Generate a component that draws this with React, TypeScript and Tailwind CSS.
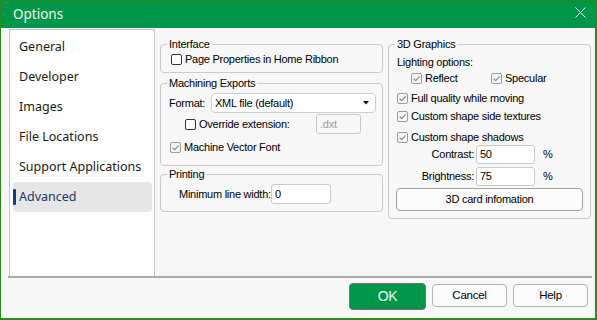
import React from 'react';

const navItems = ['General', 'Developer', 'Images', 'File Locations', 'Support Applications', 'Advanced'];

const Box: React.FC<{ checked?: boolean }> = ({ checked }) =>
  checked ? (
    <span className="w-[11px] h-[11px] shrink-0 border border-[#9b9b9b] rounded-[2px] bg-[#f7f7f7] flex items-center justify-center">
      <svg width="9" height="9" viewBox="0 0 9 9">
        <path d="M1.6 4.6 L3.7 6.7 L7.6 2.3" stroke="#878787" strokeWidth="1.1" fill="none" />
      </svg>
    </span>
  ) : (
    <span className="w-[11px] h-[11px] shrink-0 border border-[#333333] rounded-[2px] bg-white" />
  );

const CheckRow: React.FC<{ label: string; checked?: boolean; className?: string }> = ({ label, checked, className }) => (
  <div className={`flex items-center gap-[3px] h-[14px] ${className ?? ''}`}>
    <Box checked={checked} />
    <span>{label}</span>
  </div>
);

const Field: React.FC<{ value: string; className?: string; disabled?: boolean }> = ({ value, className, disabled }) => (
  <div
    className={`border border-[#c9c9c9] rounded-[3px] flex items-center pl-[3px] ${
      disabled ? 'bg-[#f7f7f7] text-[#9b9b9b]' : 'bg-white text-black'
    } ${className ?? ''}`}
  >
    {value}
  </div>
);

// fieldset keeps no horizontal padding so the legend sits at a fixed offset
const Group: React.FC<{ title: string; className?: string; inner?: string; children: React.ReactNode }> = ({
  title,
  className,
  inner,
  children,
}) => (
  <fieldset className={`border border-[#cacaca] rounded-[4px] ${className ?? ''}`}>
    <legend className="ml-[6px] px-[2px] leading-[13px]">{title}</legend>
    <div className={inner}>{children}</div>
  </fieldset>
);

export default function App() {
  return (
    <div className="w-[597px] h-[320px] bg-[#f7f7f7] border-l border-t border-r-2 border-b-2 border-[#2b8a1c] flex flex-col overflow-hidden">
      {/* title bar */}
      <div className="h-[27px] shrink-0 bg-[#00964a] flex items-center justify-between pl-[12px] pr-[9px]">
        <span className="text-[13.5px] text-[#eef8f1] font-['Noto_Sans',sans-serif]">Options</span>
        <svg width="11" height="11" viewBox="0 0 11 11" className="mb-[5px]">
          <path d="M0.5 0.5 L10.5 10.5 M10.5 0.5 L0.5 10.5" stroke="#ffffff" strokeWidth="1" />
        </svg>
      </div>

      {/* body */}
      <div className="h-[250px] shrink-0 ml-[7px] mr-[3px] border-b-2 border-[#ababab] flex">
        <nav className="mt-[1px] ml-[1px] w-[146px] h-[247px] bg-[#fdfdfd] border-l border-t border-r border-[#c6c6c6] pt-[2px] pl-[3px] pr-[2px] font-['Noto_Sans',sans-serif] text-[12.5px]">
          {navItems.map((item) => {
            const active = item === 'Advanced';
            return (
              <div
                key={item}
                className={`relative h-[30px] flex items-center pl-[6px] rounded-[4px] ${
                  active ? 'bg-[#e6e6e6] text-[#173a68]' : 'text-[#1b1b1b]'
                }`}
              >
                {active && <span className="absolute left-0 top-[7px] w-[3px] h-[16px] bg-[#123f7a] rounded-[1px]" />}
                {item}
              </div>
            );
          })}
        </nav>

        <div className="flex-1 flex gap-[5px] pl-[5px] pt-[10px] font-['Liberation_Sans',Arial,sans-serif] text-[11px] tracking-[-0.25px] text-black">
          {/* left column */}
          <div className="w-[223px] flex flex-col">
            <Group title="Interface" inner="pl-[10px] pt-[1px] pb-[6px]">
              <CheckRow label="Page Properties in Home Ribbon" />
            </Group>

            <Group title="Machining Exports" className="mt-[4px]" inner="pl-[8px] pt-[3px] pb-[11px]">
              <div className="flex items-center h-[20px]">
                <span className="w-[42px]">Format:</span>
                <div className="w-[165px] h-[20px] bg-white border border-[#cfcfcf] rounded-[4px] flex items-center justify-between pl-[3px] pr-[6px]">
                  <span>XML file (default)</span>
                  <svg width="6" height="4" viewBox="0 0 6 4">
                    <path d="M0 0 L6 0 L3 3.5 Z" fill="#111111" />
                  </svg>
                </div>
              </div>
              <div className="flex items-center h-[20px] mt-[1px]">
                <CheckRow label="Override extension:" className="ml-[16px] w-[131px]" />
                <Field value=".dxt" disabled className="w-[45px] h-[20px]" />
              </div>
              <CheckRow label="Machine Vector Font" checked className="mt-[6px] ml-[1px]" />
            </Group>

            <Group title="Printing" className="mt-[2px]" inner="pl-[18px] pt-[3px] pb-[7px]">
              <div className="flex items-center h-[20px]">
                <span className="w-[92px]">Minimum line width:</span>
                <Field value="0" className="w-[60px] h-[20px]" />
              </div>
            </Group>
          </div>

          {/* right column */}
          <div className="w-[203px]">
            <Group title="3D Graphics" inner="pl-[8px] pr-[6px] pb-[7px]">
              <div className="h-[14px] mt-[4px] flex items-center">Lighting options:</div>
              <div className="flex mt-[2px] pl-[14px]">
                <CheckRow label="Reflect" checked className="w-[80px]" />
                <CheckRow label="Specular" checked />
              </div>
              <CheckRow label="Full quality while moving" checked className="mt-[6px]" />
              <CheckRow label="Custom shape side textures" checked className="mt-[4px]" />
              <CheckRow label="Custom shape shadows" checked className="mt-[7px]" />
              <div className="flex items-center h-[19px] mt-[1px]">
                <span className="w-[78px] text-right pr-[1px]">Contrast:</span>
                <Field value="50" className="ml-[1px] w-[59px] h-[19px]" />
                <span className="ml-[8px]">%</span>
              </div>
              <div className="flex items-center h-[19px] mt-[3px]">
                <span className="w-[78px] text-right pr-[1px]">Brightness:</span>
                <Field value="75" className="ml-[1px] w-[59px] h-[19px]" />
                <span className="ml-[8px]">%</span>
              </div>
              <button className="mt-[2px] -ml-[1px] w-[187px] h-[23px] bg-[#fbfbfb] border border-[#a3a3a3] rounded-[4px] flex items-center justify-center">
                3D card infomation
              </button>
            </Group>
          </div>
        </div>
      </div>

      {/* footer */}
      <div className="flex-1 flex items-start justify-end gap-[6px] pt-[5px] pr-[7px] font-['Liberation_Sans',Arial,sans-serif] tracking-[-0.25px]">
        <button className="w-[77px] h-[27px] bg-[#00964a] border border-[#707070] rounded-[4px] text-[14px] text-[#eef8f1] flex items-center justify-center">
          OK
        </button>
        <button className="mt-[1px] w-[75px] h-[23px] bg-[#fbfbfb] border border-[#b3b3b3] rounded-[4px] text-[11.5px] text-black flex items-center justify-center">
          Cancel
        </button>
        <button className="mt-[1px] w-[75px] h-[23px] bg-[#fbfbfb] border border-[#b3b3b3] rounded-[4px] text-[11.5px] text-black flex items-center justify-center">
          Help
        </button>
      </div>
    </div>
  );
}
